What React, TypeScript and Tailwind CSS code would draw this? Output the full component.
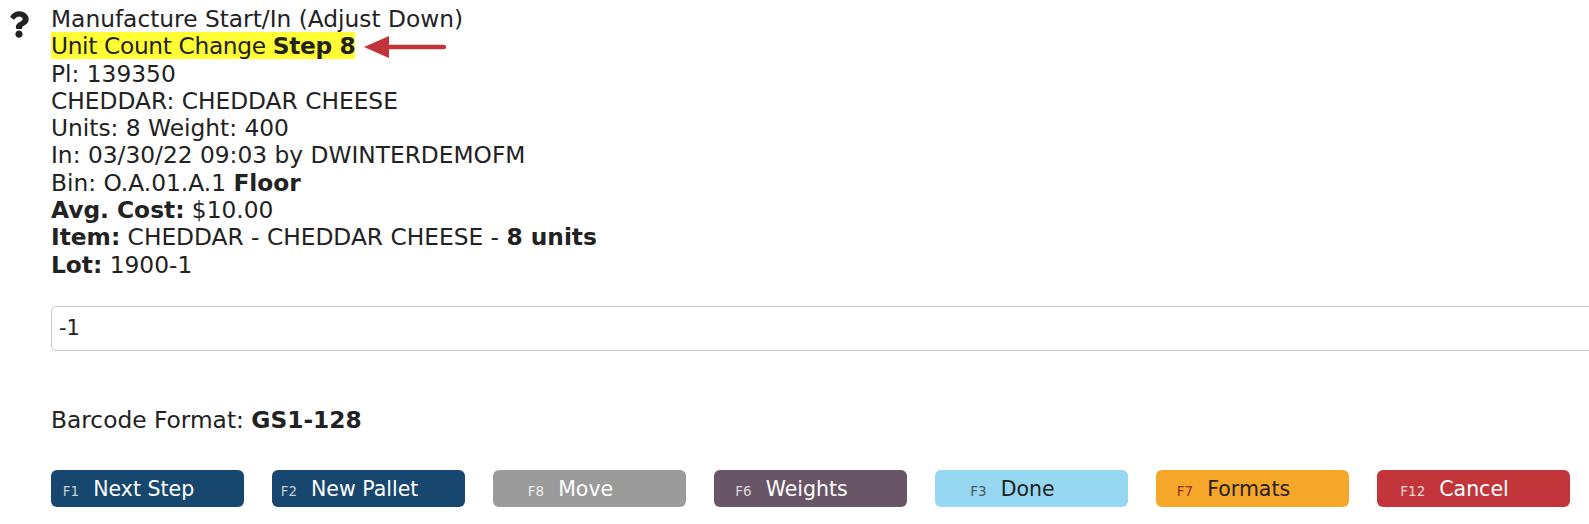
import { FaQuestion } from 'react-icons/fa';

interface KeyButtonProps {
  fkey: string;
  label: string;
  bg: string;
  text: string;
  keyText: string;
}

const buttons: KeyButtonProps[] = [
  { fkey: 'F1', label: 'Next Step', bg: 'bg-[#17466f]', text: 'text-white', keyText: 'text-[#c4ccd6]' },
  { fkey: 'F2', label: 'New Pallet', bg: 'bg-[#17466f]', text: 'text-white', keyText: 'text-[#c4ccd6]' },
  { fkey: 'F8', label: 'Move', bg: 'bg-[#9a9b9a]', text: 'text-white', keyText: 'text-[#eeeeee]' },
  { fkey: 'F6', label: 'Weights', bg: 'bg-[#685565]', text: 'text-white', keyText: 'text-[#dcd6da]' },
  { fkey: 'F3', label: 'Done', bg: 'bg-[#96d7f1]', text: 'text-[#222222]', keyText: 'text-[#4a5a63]' },
  { fkey: 'F7', label: 'Formats', bg: 'bg-[#f5a72a]', text: 'text-[#2a2020]', keyText: 'text-[#9a2a1c]' },
  { fkey: 'F12', label: 'Cancel', bg: 'bg-[#c2363b]', text: 'text-white', keyText: 'text-[#f1d6d6]' },
];

function KeyButton({ fkey, label, bg, text, keyText }: KeyButtonProps) {
  return (
    <button
      type="button"
      className={`flex h-[37px] w-[193px] shrink-0 items-baseline justify-center rounded-[6px] pr-[38px] pt-[6px] ${bg}`}
    >
      <span className={`mr-[14px] text-[13.5px] ${keyText}`}>{fkey}</span>
      <span className={`text-[20.5px] leading-[26px] ${text}`}>{label}</span>
    </button>
  );
}

function RedArrow() {
  return (
    <svg
      width="82"
      height="22"
      viewBox="0 0 82 22"
      className="ml-[9px] inline-block align-[-4px]"
      aria-hidden="true"
    >
      <polygon points="0,11 25,0 25,22" fill="#c0343a" />
      <rect x="22" y="8.7" width="60" height="4.6" rx="2" fill="#c0343a" />
    </svg>
  );
}

export default function App() {
  return (
    <div
      className="flex w-full overflow-hidden bg-white text-[#222222]"
      style={{ fontFamily: '"DejaVu Sans", Verdana, sans-serif' }}
    >
      <div className="w-[51px] shrink-0 pl-[9px] pt-[11px]">
        <FaQuestion className="h-[27px] w-[20px] text-[#222222]" />
      </div>

      <div className="min-w-0 flex-1 pt-[5px]">
        <div className="text-[23.3px] leading-[27.3px]">
          <div>Manufacture Start/In (Adjust Down)</div>
          <div>
            <span className="bg-[#ffff33] tracking-[-0.35px]">
              Unit Count Change <b>Step 8</b>
            </span>
            <RedArrow />
          </div>
          <div>Pl: 139350</div>
          <div>CHEDDAR: CHEDDAR CHEESE</div>
          <div>Units: 8 Weight: 400</div>
          <div>In: 03/30/22 09:03 by DWINTERDEMOFM</div>
          <div>
            Bin: O.A.01.A.1 <b>Floor</b>
          </div>
          <div>
            <b>Avg. Cost:</b> $10.00
          </div>
          <div>
            <b>Item:</b> CHEDDAR - CHEDDAR CHEESE - <b>8 units</b>
          </div>
          <div>
            <b>Lot:</b> 1900-1
          </div>
        </div>

        <input
          type="text"
          defaultValue="-1"
          className="mt-[28px] block h-[45px] w-[1580px] rounded-[5px] border border-[#c6cacf] bg-white px-[7px] text-[21px] text-[#222222] outline-none"
        />

        <div className="mt-[55px] text-[23.3px] leading-[27.3px]">
          Barcode Format: <b>GS1-128</b>
        </div>

        <div className="mt-[37px] flex gap-[28px]">
          {buttons.map((b) => (
            <KeyButton key={b.fkey} {...b} />
          ))}
        </div>
      </div>
    </div>
  );
}
